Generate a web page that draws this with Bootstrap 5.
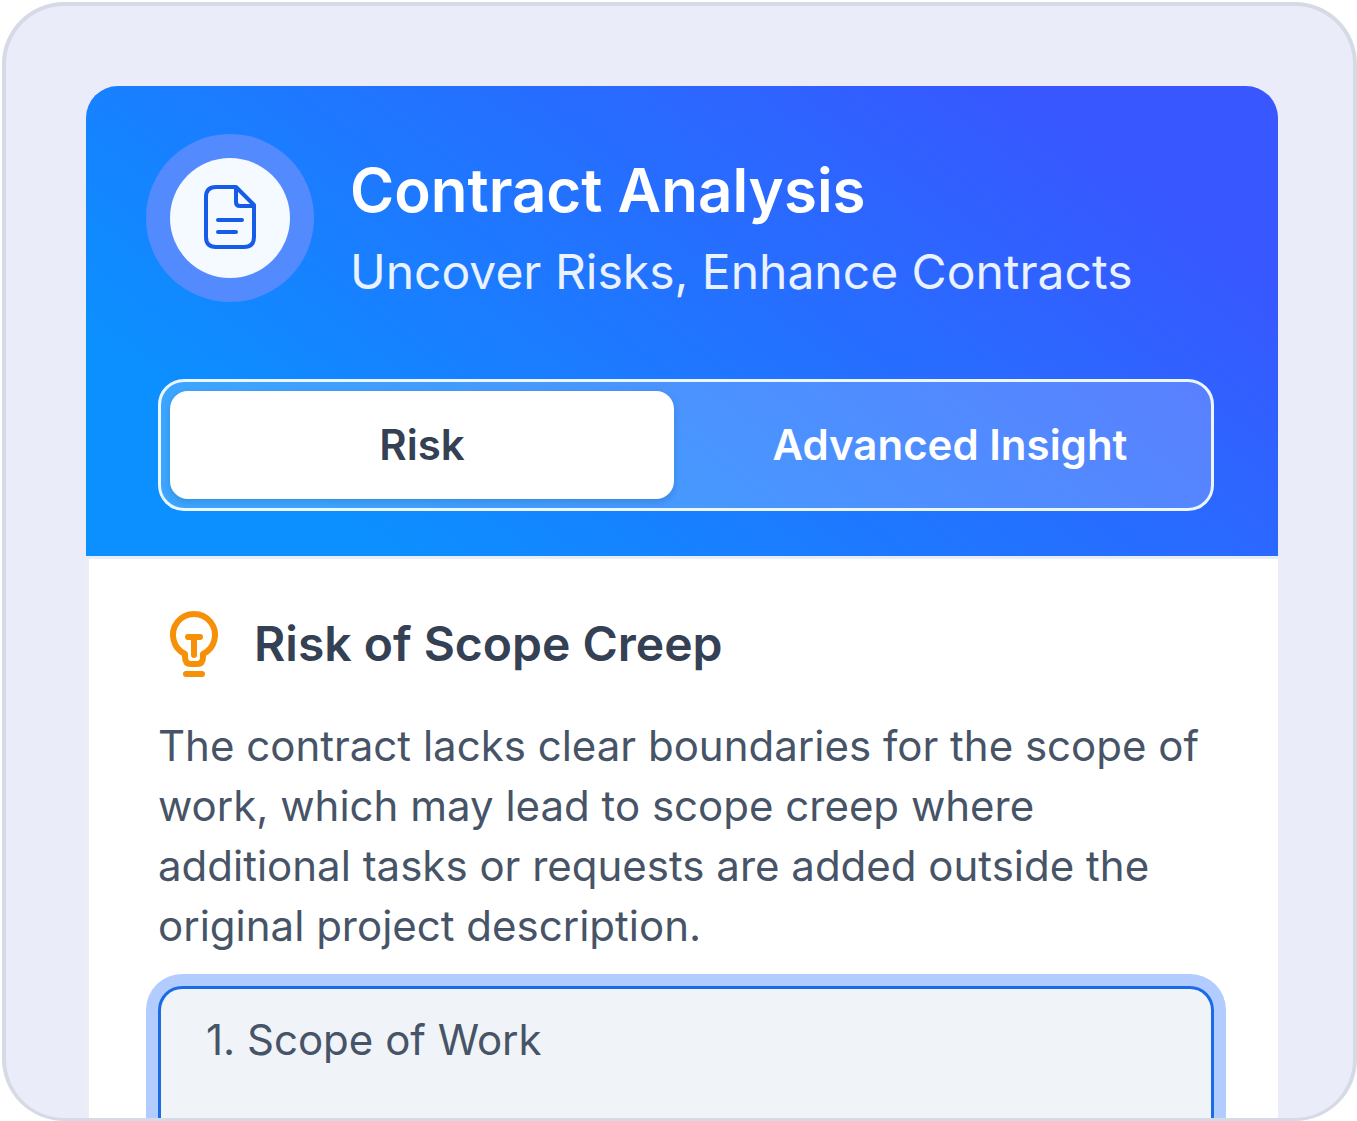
<!DOCTYPE html>
<html lang="en">
<head>
<meta charset="utf-8">
<meta name="viewport" content="width=device-width, initial-scale=1">
<title>Contract Analysis</title>
<link href="https://cdn.jsdelivr.net/npm/bootstrap@5.3.0/dist/css/bootstrap.min.css" rel="stylesheet">
<style>
  body { font-family: Inter, "Liberation Sans", sans-serif; background: #fff; }
  .page-wrap { padding: 2px 0 0 2px; }
  .frame { background: #eaedf9; border: 4px solid #d5dae4; border-bottom-width: 3px; border-radius: 62px; padding: 80px 75px 0 80px; overflow: hidden; }
  .panel-head { background: linear-gradient(37deg, #0c8fff 17%, #3857ff 86%); border-radius: 32px 32px 0 0; padding: 48px 64px 45px 60px; }
  .head-row { gap: 36px; margin-bottom: 71px; }
  .doc-ring { width: 168px; height: 168px; background: #538bff; padding: 24px; }
  .doc-disc { background: #f4faff; }
  .title-text { font-size: 60px; line-height: 72px; font-weight: 600; margin: 20px 0 10px; }
  .subtitle-text { font-size: 48px; line-height: 72px; color: #eaf1ff; }
  .tab-strip { margin-left: 12px; border: 3px solid #ecf6ff; border-radius: 26px; padding: 9px; gap: 24px; background: rgba(255,255,255,.2); }
  .tab-btn { border: 0; border-radius: 18px; height: 108px; font-size: 42px; line-height: 60px; font-weight: 600; color: #fff; background: transparent; }
  .tab-btn.active { background: #fff; color: #344054; box-shadow: 0 3px 6px rgba(16,24,40,.14); }
  .panel-body { background: #fff; border-top: 3px solid #e6edf8; border-left: 3px solid #eceef4; padding: 49px 64px 0 69px; }
  .risk-row { gap: 24px; margin-bottom: 36px; }
  .risk-title { font-size: 48px; line-height: 72px; font-weight: 600; color: #344054; }
  .risk-text { font-size: 42px; line-height: 60px; color: #475467; margin-bottom: 30px; }
  .clause { min-height: 132px; border: 3px solid #1a6ce6; border-bottom: 0; border-radius: 24px 24px 0 0; background: #f0f3f8; box-shadow: 0 0 0 12px #b2ccff; padding: 21px 45px; font-size: 42px; line-height: 60px; color: #475467; }
</style>
</head>
<body>
<div class="page-wrap">
  <main class="frame">
    <header class="panel-head">
      <div class="head-row d-flex align-items-start">
        <div class="doc-ring rounded-circle flex-shrink-0">
          <div class="doc-disc rounded-circle w-100 h-100 d-flex align-items-center justify-content-center">
            <svg width="60" height="72" viewBox="0 0 60 72" fill="none" stroke="#175ce6" stroke-width="4" stroke-linecap="round" stroke-linejoin="round" aria-hidden="true">
              <path d="M36 5H16Q6 5 6 15V55Q6 65 16 65H44Q54 65 54 55V23L36 5V20Q36 24 40 24H54"/>
              <path d="M18 38H42M18 50H36"/>
            </svg>
          </div>
        </div>
        <div>
          <h1 class="title-text text-white">Contract Analysis</h1>
          <p class="subtitle-text mb-0">Uncover Risks, Enhance Contracts</p>
        </div>
      </div>
      <div class="tab-strip d-flex" role="tablist">
        <button class="tab-btn active flex-fill w-50" type="button" role="tab" aria-selected="true">Risk</button>
        <button class="tab-btn flex-fill w-50" type="button" role="tab" aria-selected="false">Advanced Insight</button>
      </div>
    </header>
    <section class="panel-body">
      <div class="risk-row d-flex align-items-center">
        <svg class="flex-shrink-0" width="72" height="72" viewBox="0 0 72 72" fill="none" stroke="#f79009" stroke-width="6" stroke-linecap="round" stroke-linejoin="round" aria-hidden="true">
          <path d="M27 46A21 21 0 1 1 45 46V49Q45 56 39 56H33Q27 56 27 49Z" stroke="none"/>
          <path d="M27 46A21 21 0 1 1 45 46V49Q45 56 39 56H33Q27 56 27 49Z"/>
          <path d="M30 29H42M36 29V47M28 66H44"/>
        </svg>
        <h2 class="risk-title mb-0">Risk of Scope Creep</h2>
      </div>
      <p class="risk-text">The contract lacks clear boundaries for the scope of work, which may lead to scope creep where additional tasks or requests are added outside the original project description.</p>
      <div class="clause">1. Scope of Work</div>
    </section>
  </main>
</div>
<script src="https://cdn.jsdelivr.net/npm/bootstrap@5.3.0/dist/js/bootstrap.bundle.min.js"></script>
</body>
</html>
